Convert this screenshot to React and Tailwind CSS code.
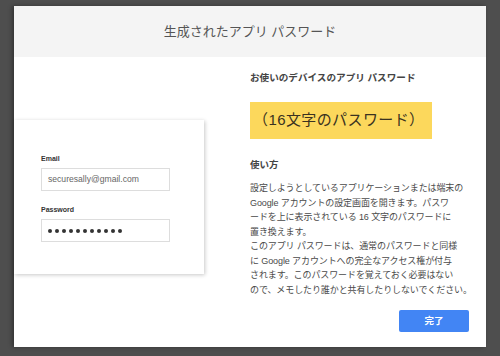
import React from 'react'

const JP = { fontFamily: '"Liberation Sans", "Noto Sans CJK JP", sans-serif' }

const HOWTO = [
  '設定しようとしているアプリケーションまたは端末の',
  'Google アカウントの設定画面を開きます。パスワ',
  'ードを上に表示されている 16 文字のパスワードに',
  '置き換えます。',
  'このアプリ パスワードは、通常のパスワードと同様',
  'に Google アカウントへの完全なアクセス権が付与',
  'されます。このパスワードを覚えておく必要はない',
  'ので、メモしたり誰かと共有したりしないでください。'
]

function SignInCard() {
  return (
    <div className="mt-[63px] h-[154px] w-[190px] bg-white pl-[27px] pt-[34px] shadow-[1px_1px_4px_rgba(0,0,0,0.22)]">
      <div className="text-[7px] font-bold leading-[10px] text-[#333]">Email</div>
      <div className="mt-[4px] flex h-[23px] w-[129px] items-center border border-[#ddd] px-[6px] text-[8.6px] text-[#666]">
        securesally@gmail.com
      </div>
      <div className="mt-[14px] text-[7px] font-bold leading-[10px] text-[#333]">Password</div>
      <div className="mt-[4px] flex h-[23px] w-[129px] items-center gap-[3px] border border-[#ddd] px-[6px]">
        {Array.from({ length: 11 }).map((_, i) => (
          <span key={i} className="h-[4px] w-[4px] rounded-full bg-[#333]" />
        ))}
      </div>
    </div>
  )
}

export default function App() {
  return (
    <div className="h-[356px] w-[500px] bg-[#4e4e4e] px-[14px] pt-[6px]" style={JP}>
      <div className="flex h-[341px] w-[472px] flex-col bg-white shadow-[-2px_0_4px_rgba(0,0,0,0.35)]">
        {/* header */}
        <div className="flex h-[51px] items-center justify-center bg-[#f4f4f4] text-[13px] text-[#555]">
          生成されたアプリ パスワード
        </div>

        <div className="flex flex-1">
          <div className="w-[236px]">
            <SignInCard />
          </div>

          <div className="flex w-[219px] flex-col pt-[14px]">
            <div className="text-[9.6px] font-bold leading-[14px] text-[#444]">
              お使いのデバイスのアプリ パスワード
            </div>
            <div className="mt-[17px] flex h-[37px] w-[182px] items-center bg-[#fcd85c] pl-[3px] text-[15px] tracking-[0.4px] text-[#3a3220]">
              （16文字のパスワード）
            </div>
            <div className="mt-[19px] text-[9.5px] font-bold leading-[14px] text-[#444]">使い方</div>
            <div className="mt-[9px] text-[9px] leading-[14.5px] tracking-[-0.1px] text-[#4a4a4a]">
              {HOWTO.map((line, i) => (
                <div key={i} className="whitespace-nowrap">{line}</div>
              ))}
            </div>
            <div className="mt-[13px] flex justify-end">
              <button className="h-[22px] w-[70px] rounded-[2px] bg-[#4285f4] text-[9.5px] font-bold text-white">
                完了
              </button>
            </div>
          </div>
        </div>
      </div>
    </div>
  )
}
